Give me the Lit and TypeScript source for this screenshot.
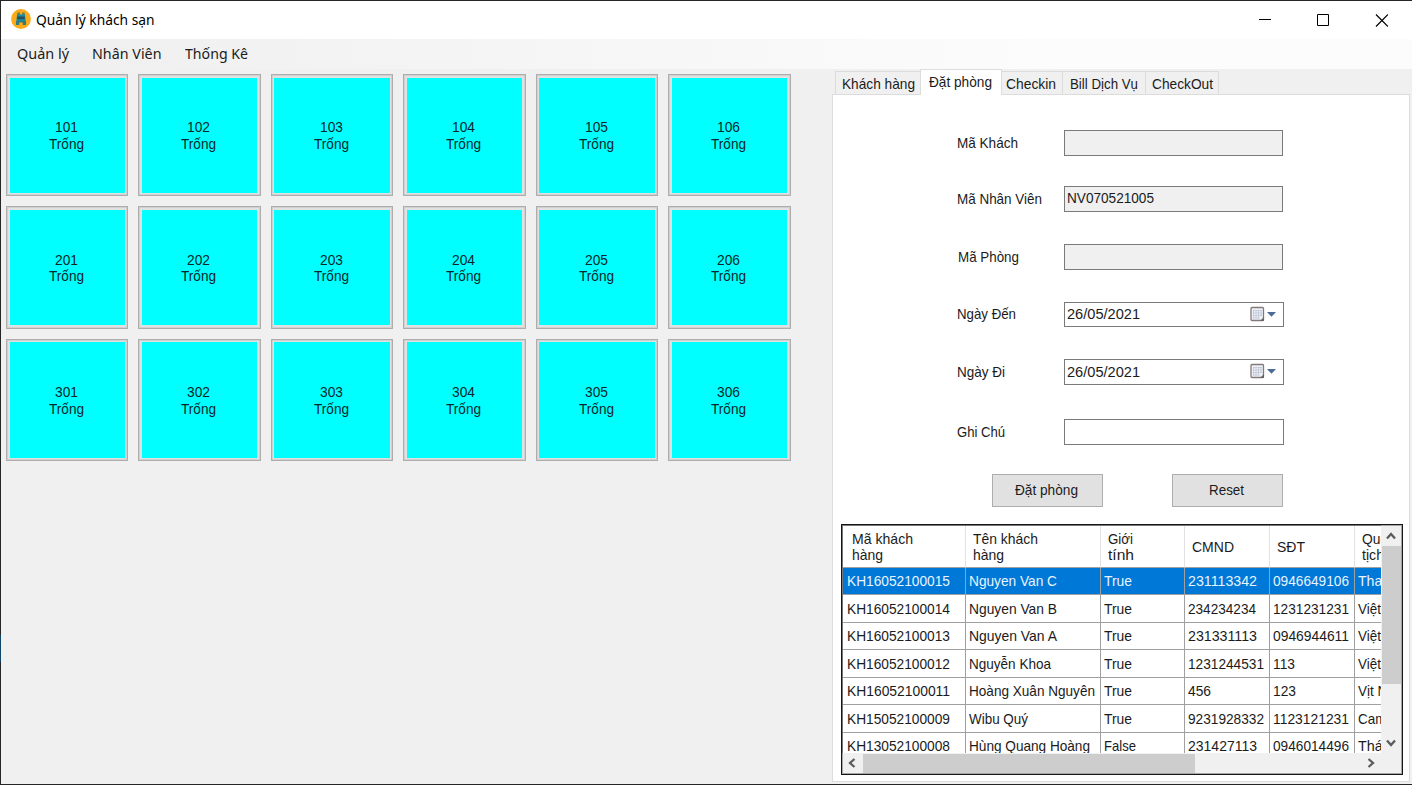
import { LitElement, html, css, svg } from "lit";
import { customElement, property, query } from "lit/decorators.js";

/** One line of text, condensed or stretched horizontally to a set width. */
@customElement("fit-text")
class FitText extends LitElement {
  @property({ type: Number }) w = 0;
  @property() text = "";
  @query("span") span!: HTMLSpanElement;
  static styles = css`
    :host { display: block; white-space: pre; flex: none; }
    span { display: inline-block; transform-origin: 0 50%; }
  `;
  render() { return html`<span>${this.text}</span>`; }
  updated() {
    this.span.style.transform = "none";
    this.style.width = `${this.w}px`;
    const natural = this.span.getBoundingClientRect().width;
    if (natural) this.span.style.transform = `scaleX(${this.w / natural})`;
  }
}

const t = (text: string, w: number) => html`<fit-text .text=${text} .w=${w}></fit-text>`;

const appIcon = html`<svg class="logo" width="20" height="20" viewBox="0 0 20 20">
  <circle cx="10" cy="10" r="9.9" fill="#fbaa19"/>
  <rect x="6.4" y="3.500" width="2.500" height="3" fill="#5b7f5c"/><rect x="11.200" y="3.500" width="2.500" height="3" fill="#5b7f5c"/>
  <path d="M6 5.500h8l.6 6.500-1 1H6.400l-1-1z" fill="#1590a4"/>
  <path d="M6.200 7.500h7.600v2.800H6.200z" fill="#27505f"/>
  <path d="M5 12h10v4h-3.200v-2.500H8.200V16H5z" fill="#347b80"/>
</svg>`;

const calendar = html`<svg width="28" height="17" viewBox="0 0 28 17">
  <rect x="1" y="1.500" width="12.500" height="13" rx="1" fill="#eef1f6" stroke="#85797a" stroke-width="1.300"/>
  <path d="M3 4.500h9M3 7h9M3 9.500h9M3 12h6.500M3.500 4v8.500M6 4v8.500M8.500 4v8.500M11 4v6" stroke="#bcc6d6" stroke-width=".8"/>
  <path d="M10 15l4-4v4z" fill="#6b6264"/>
  <path d="M17 6h9l-4.500 4.700z" fill="#4a6a97"/>
</svg>`;

const chevron = (d: string) => html`<svg width="12" height="12" viewBox="0 0 12 12">${svg`<path d=${d} fill="none" stroke="#5c5c5c" stroke-width="2.300"/>`}</svg>`;

type Cell = [string, number];
const headers: Cell[][] = [
  [["Mã khách", 61], ["hàng", 31]],
  [["Tên khách", 65], ["hàng", 31]],
  [["Giới", 25], ["tính", 26]],
  [["CMND", 42]],
  [["SĐT", 28]],
  [["Quốc", 33], ["tịch", 22]],
];
const rows: Cell[][] = [
  [["KH16052100015", 103], ["Nguyen Van C", 88], ["True", 28], ["231113342", 69], ["0946649106", 76], ["Thailand", 54]],
  [["KH16052100014", 103], ["Nguyen Van B", 88], ["True", 28], ["234234234", 68], ["1231231231", 76], ["Việt Nam", 55]],
  [["KH16052100013", 103], ["Nguyen Van A", 88], ["True", 28], ["231331113", 69], ["0946944611", 76], ["Việt Nam", 55]],
  [["KH16052100012", 103], ["Nguyễn Khoa", 82], ["True", 28], ["1231244531", 76], ["113", 22], ["Việt Nam", 55]],
  [["KH16052100011", 103], ["Hoàng Xuân Nguyên", 126], ["True", 28], ["456", 23], ["123", 23], ["Vịt Nam", 48]],
  [["KH15052100009", 103], ["Wibu Quý", 59], ["True", 28], ["9231928332", 76], ["1123121231", 76], ["Campuchia", 68]],
  [["KH13052100008", 103], ["Hùng Quang Hoàng", 121], ["False", 32], ["231427113", 69], ["0946014496", 76], ["Thái Lan", 56]],
];

@customElement("app-root")
class AppRoot extends LitElement {
  static styles = css`
    :host { display: block; }
    * { box-sizing: border-box; }
    .window { width: 1412px; height: 785px; overflow: hidden; background: #f0f0f0; color: #1b1b1b;
      border: 1px solid #262626; border-right: 0;
      border-image: linear-gradient(#262626 635px, #0f4566 635px, #0f4566 662px, #262626 662px) 1 0 1 1;
      display: flex; flex-direction: column; font: 15px/16.5px "Liberation Sans", Arial, sans-serif; }
    .title { height: 38px; flex: none; background: #fff; display: flex; align-items: center; color: #000;
      padding: 0 24px 0 10px; font: 14px/20px "Noto Sans", "Open Sans", sans-serif; }
    .logo { margin: 0 5px 2px 0; }
    .controls { margin-left: auto; display: flex; }
    .menu { height: 30px; flex: none; display: flex; align-items: center; gap: 23px; padding: 0 0 2px 16px;
      font: 14.5px/20px "Noto Sans", "Open Sans", sans-serif; background: linear-gradient(90deg, #f0f0f0 8%, #fcfcfc 75%); }
    .body { display: flex; flex: 1; min-height: 0; }
    .rooms { width: 831px; flex: none; padding: 5px 0 0 5px; display: grid; align-content: start;
      grid-template-columns: repeat(6, 122.4px); grid-auto-rows: 122.4px; gap: 10.1px; }
    .room { border: 1px solid #adadad; outline: 1px solid #d0d0d0; outline-offset: -2px; background: #e1e1e1; padding: 2.5px; }
    .cyan { height: 100%; background: #0ff; color: #06282b; display: flex; flex-direction: column;
      align-items: center; justify-content: center; padding: 1px 2px 0 0; }
    .side { flex: 1; min-width: 0; display: flex; flex-direction: column; padding-right: 2px; }
    .tabs { display: flex; height: 26px; flex: none; align-items: flex-end; padding-left: 3px; margin-bottom: -1px; z-index: 1; }
    .tab { height: 24px; border: 1px solid #dcdcdc; border-left: 0; display: flex; align-items: center; justify-content: center; padding-top: 2px; }
    .tab.first { width: 85px; border-left: 1px solid #dcdcdc; border-right: 0; }
    .tab.on { width: 82px; height: 26px; background: #fff; border: 1px solid #dcdcdc; border-bottom: 0; padding: 0 2px 0 0; }
    .tab.checkin { width: 61px; padding-right: 2px; } .bill { width: 83px; } .out { width: 73px; }
    .panel { flex: 1; min-height: 0; background: #fff; border: 1px solid #dcdcdc; margin-bottom: 2px; display: flex; flex-direction: column; }
    .form { height: 429px; flex: none; padding: 35px 0 0 124px; display: grid; grid-template-columns: 107px 220px;
      grid-template-rows: 56px 58px 57.5px 57.5px 60px 55px 50px; align-items: start; }
    .label { height: 26px; display: flex; align-items: center; }
    .label.shifted { padding-left: 1px; }
    .input { width: 219px; height: 25.500px; border: 1px solid #7a7a7a; background: #f0f0f0; display: flex; align-items: center; padding: 0 5px 2px 2px; }
    .input.white { width: 220px; background: #fff; padding-bottom: 0; }
    .input svg { margin-left: auto; }
    .actions { grid-column: 1 / 3; display: flex; justify-content: space-between; padding: 0 1px 0 35px; }
    .button { width: 111px; height: 33px; border: 1px solid #adadad; background: #e1e1e1; display: flex; align-items: center; justify-content: center; padding-right: 2px; }
    .grid { margin-left: 8px; width: 562px; height: 251px; border: 1px solid #161616; outline: 1px solid rgba(30,30,30,.35); outline-offset: -2px;
      background: #f0f0f0; display: grid; grid-template: 228px 21px / 539px 20px; }
    .data { overflow: hidden; background: #fff; border: 1px solid #a8a8a8; border-right: 0; border-bottom: 0; }
    .row { display: grid; grid-template-columns: 123px 135px 84px 85px 85px 120px; height: 27.500px; background: #fff; }
    .cell { border-right: 1px solid #a0a0a0; border-bottom: 1px solid #a0a0a0; padding: 1px 0 0 3px; display: flex; align-items: center; overflow: hidden; }
    .cell:first-child { padding-left: 3.500px; }
    .selected .cell { background: #0078d7; color: #e8f4ff; }
    .head { height: 41.500px; }
    .head .cell { border-right-color: #e2e2e2; flex-direction: column; align-items: flex-start; justify-content: center; padding: 1.500px 0 0 7px; }
    .head .cell:first-child { padding-left: 9px; }
    .vbar, .hbar { display: flex; align-items: center; }
    .vbar { flex-direction: column; padding-top: 5px; }
    .vthumb { width: 19px; height: 138px; margin-top: 4px; background: #cdcdcd; }
    .vbar svg:last-child { margin: auto 0 4px; }
    .hbar { padding: 0 5px 1px 4px; grid-column: 1; }
    .hthumb { width: 332px; height: 19px; margin-left: 5px; background: #cdcdcd; }
    .hbar svg:last-child { margin-left: auto; margin-right: -1px; }
  `;

  field(label: Cell, value: Cell | null, kind: "gray" | "date" | "white", shifted = false) {
    return html`<div class="label ${shifted ? "shifted" : ""}">${t(...label)}</div>
      <div class="input ${kind === "gray" ? "" : "white"}">${value ? t(...value) : ""}${kind === "date" ? calendar : ""}</div>`;
  }

  render() {
    const rooms = [1, 2, 3].flatMap((f) => [1, 2, 3, 4, 5, 6].map((n) => `${f}0${n}`));
    return html`<div class="window">
      <div class="title">${appIcon}${t("Quản lý khách sạn", 118.5)}
        <svg class="controls" width="130" height="14" viewBox="0 0 130 14" fill="none" stroke="#000">
          <path d="M1 6.500h12M59.500 1.500h11v11h-11z"/><path d="M118 1.500l12 12M130 1.500l-12 12" stroke-width="1.200"/>
        </svg>
      </div>
      <div class="menu">${t("Quản lý", 52)}${t("Nhân Viên", 69.500)}${t("Thống Kê", 63)}</div>
      <div class="body">
        <div class="rooms">${rooms.map((r) => html`<div class="room"><div class="cyan">${t(r, 23)}${t("Trống", 35)}</div></div>`)}</div>
        <div class="side">
          <div class="tabs">
            <div class="tab first">${t("Khách hàng", 73)}</div>
            <div class="tab on">${t("Đặt phòng", 63)}</div>
            <div class="tab checkin">${t("Checkin", 50)}</div>
            <div class="tab bill">${t("Bill Dịch Vụ", 68)}</div>
            <div class="tab out">${t("CheckOut", 61)}</div>
          </div>
          <div class="panel">
            <div class="form">
              ${this.field(["Mã Khách", 61], null, "gray")}
              ${this.field(["Mã Nhân Viên", 85], ["NV070521005", 87], "gray")}
              ${this.field(["Mã Phòng", 61], null, "gray", true)}
              ${this.field(["Ngày Đến", 59], ["26/05/2021", 73], "date")}
              ${this.field(["Ngày Đi", 48], ["26/05/2021", 73], "date")}
              ${this.field(["Ghi Chú", 48], null, "white")}
              <div class="actions"><div class="button">${t("Đặt phòng", 63)}</div><div class="button">${t("Reset", 35)}</div></div>
            </div>
            <div class="grid">
              <div class="data">
                <div class="row head">${headers.map((h) => html`<div class="cell">${h.map((c) => t(...c))}</div>`)}</div>
                ${rows.map((r, i) => html`<div class="row ${i === 0 ? "selected" : ""}">${r.map((c) => html`<div class="cell">${t(...c)}</div>`)}</div>`)}
              </div>
              <div class="vbar">${chevron("M2 8.500L6 4l4 4.500")}<div class="vthumb"></div>${chevron("M2 3.500L6 8l4-4.500")}</div>
              <div class="hbar">${chevron("M8.500 2L4 6l4.500 4")}<div class="hthumb"></div>${chevron("M3.500 2L8 6l-4.500 4")}</div>
            </div>
          </div>
        </div>
      </div>
    </div>`;
  }
}
